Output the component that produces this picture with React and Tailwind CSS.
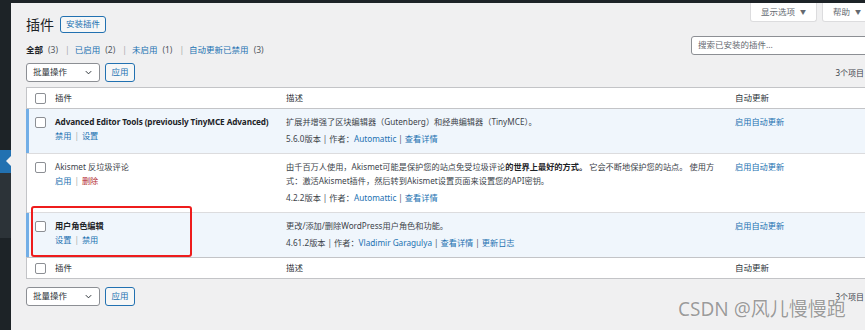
import React from 'react';

const Checkbox = () => (
  <span className="block w-[11px] h-[11px] rounded-[2px] border border-[#8c8f94] bg-white" />
);

const Sep = () => <span className="text-[#a7aaad] mx-[3px]">|</span>;
const MSep = () => <span className="text-[#50575e] mx-[2px]">|</span>;

const A = ({ children, red }) => (
  <span className={red ? 'text-[#b32d2e]' : 'text-[#2271b1]'}>{children}</span>
);

const plugins = [
  {
    name: 'Advanced Editor Tools (previously TinyMCE Advanced)',
    active: true,
    actions: [['禁用'], ['设置']],
    desc: ['扩展并增强了区块编辑器（Gutenberg）和经典编辑器（TinyMCE）。'],
    version: '5.6.0',
    author: 'Automattic',
    links: ['查看详情'],
  },
  {
    name: 'Akismet 反垃圾评论',
    active: false,
    actions: [['启用'], ['删除', true]],
    desc: null,
    version: '4.2.2',
    author: 'Automattic',
    links: ['查看详情'],
  },
  {
    name: '用户角色编辑',
    active: true,
    actions: [['设置'], ['禁用']],
    desc: ['更改/添加/删除WordPress用户角色和功能。'],
    version: '4.61.2',
    author: 'Vladimir Garagulya',
    links: ['查看详情', '更新日志'],
    marked: true,
  },
];

const HeadRow = ({ top }) => (
  <div
    className={`flex h-[21px] items-center text-[8.5px] text-[#2c3338] ${
      top ? 'border-b border-[#c3c4c7]' : 'border-t border-[#c3c4c7]'
    }`}
  >
    <div className="w-[28px] pl-[8px]">
      <Checkbox />
    </div>
    <div className="w-[231px]">插件</div>
    <div className="w-[449px]">描述</div>
    <div className="flex-1">自动更新</div>
  </div>
);

const PluginRow = ({ p, first }) => (
  <div
    className={`relative flex ${first ? '' : 'border-t border-[#dcdcde]'} ${
      p.active ? 'bg-[#f0f6fc]' : 'bg-white'
    }`}
  >
    <div
      className={
        p.active
          ? 'w-[29px] -ml-px border-l-[3px] border-l-[#72aee6] pl-[6px] pt-[8px]'
          : 'w-[28px] pl-[8px] pt-[8px]'
      }
    >
      <Checkbox />
    </div>
    <div className="w-[231px] pt-[6px] pb-[7px] text-[8.2px] leading-[14px]">
      <div className={p.active ? 'font-bold text-[#1d2327] tracking-[-0.1px]' : 'text-[#3c434a]'}>
        {p.name}
      </div>
      <div>
        {p.actions.map(([label, red], i) => (
          <React.Fragment key={label}>
            {i > 0 && <Sep />}
            <A red={red}>{label}</A>
          </React.Fragment>
        ))}
      </div>
    </div>
    <div className="w-[449px] pt-[6px] pb-[7px] text-[8.2px] leading-[14px] text-[#3c434a]">
      {p.desc ? (
        <div className="whitespace-nowrap">{p.desc[0]}</div>
      ) : (
        <div className="whitespace-nowrap">
          由千百万人使用，Akismet可能是保护您的站点免受垃圾评论
          <b className="text-[#1d2327]">的世界上最好的方式。</b> 它会不断地保护您的站点。 使用方
          <br />
          式：激活Akismet插件，然后转到Akismet设置页面来设置您的API密钥。
        </div>
      )}
      <div className="mt-[3px] whitespace-nowrap">
        {p.version}版本
        <MSep />
        作者：<A>{p.author}</A>
        {p.links.map((l) => (
          <React.Fragment key={l}>
            <MSep />
            <A>{l}</A>
          </React.Fragment>
        ))}
      </div>
    </div>
    <div className="flex-1 pt-[6px] text-[8.2px] leading-[14px]">
      <A>启用自动更新</A>
    </div>
    {p.marked && (
      <div className="absolute left-[4px] top-[-7px] w-[161px] h-[51px] rounded-[3px] border-2 border-[#ee1c1c]" />
    )}
  </div>
);

const BulkBar = () => (
  <div className="flex items-center gap-[5px]">
    <div className="flex items-center justify-between w-[74px] h-[19px] px-[6px] rounded-[3px] border border-[#8c8f94] bg-white text-[8.5px] text-[#2c3338]">
      <span>批量操作</span>
      <svg width="9" height="9" viewBox="0 0 20 20" fill="none" stroke="#2c3338" strokeWidth="2.2">
        <path d="M4 7l6 6 6-6" />
      </svg>
    </div>
    <div className="flex items-center justify-center w-[30px] h-[19px] rounded-[3px] border border-[#2271b1] bg-[#f6f7f7] text-[8.5px] text-[#2271b1]">
      应用
    </div>
  </div>
);

const Count = ({ n }) => <span className="ml-[5px] text-[#50575e]">({n})</span>;
const FSep = () => <span className="text-[#a7aaad] ml-[7px] mr-[5px]">|</span>;

export default function App() {
  return (
    <div className="relative w-[865px] h-[330px] overflow-hidden bg-[#f0f0f1] flex flex-col font-['Noto_Sans','Noto_Sans_CJK_SC',sans-serif]">
      <div className="h-[3px] shrink-0 bg-[#1d2327]" />
      <div className="flex flex-1 min-h-0">
        {/* admin menu */}
        <aside className="w-[11px] shrink-0 flex flex-col">
          <div className="h-[147px] bg-[#1d2327]" />
          <div className="relative h-[23px] bg-[#2271b1]">
            <span className="absolute right-0 top-[6px] w-0 h-0 border-y-[5px] border-y-transparent border-r-[5px] border-r-[#f0f0f1]" />
          </div>
          <div className="h-[65px] bg-[#2c3338]" />
          <div className="flex-1 bg-[#1d2327]" />
        </aside>

        <main className="w-[850px] shrink-0 ml-[15px]">
          {/* title + screen meta */}
          <div className="flex items-start justify-between">
            <div className="flex items-center gap-[6px] mt-[13px]">
              <h1 className="text-[14px] leading-[17px] text-[#1d2327]">插件</h1>
              <div className="flex items-center h-[17px] px-[5px] rounded-[3px] border border-[#2271b1] bg-[#f6f7f7] text-[8.5px] text-[#2271b1]">
                安装插件
              </div>
            </div>
            <div className="flex gap-[5px] mr-[4px]">
              <div className="flex items-center gap-[5px] h-[19px] px-[10px] bg-white border border-t-0 border-[#dcdcde] rounded-b-[3px] text-[8.5px] text-[#646970]">
                显示选项<span className="text-[6px]">▼</span>
              </div>
              <div className="flex items-center gap-[5px] h-[19px] px-[10px] bg-white border border-t-0 border-[#dcdcde] rounded-b-[3px] text-[8.5px] text-[#646970]">
                帮助<span className="text-[6px]">▼</span>
              </div>
            </div>
          </div>

          {/* filters + search */}
          <div className="flex items-start justify-between mt-[3px]">
            <div className="mt-[7px] text-[8.5px] leading-[14px] whitespace-nowrap">
              <b className="text-[#1d2327]">全部</b>
              <Count n={3} />
              <FSep />
              <A>已启用</A>
              <Count n={2} />
              <FSep />
              <A>未启用</A>
              <Count n={1} />
              <FSep />
              <A>自动更新已禁用</A>
              <Count n={3} />
            </div>
            <div className="flex items-center w-[180px] h-[19px] mr-[5px] px-[6px] rounded-[3px] border border-[#8c8f94] bg-white text-[8.5px] text-[#646970]">
              搜索已安装的插件...
            </div>
          </div>

          {/* bulk actions top */}
          <div className="flex items-center justify-between mt-[6px]">
            <BulkBar />
            <span className="mr-[12px] text-[8px] text-[#3c434a]">3个项目</span>
          </div>

          {/* table */}
          <div className="mt-[5px] border border-[#c3c4c7] bg-white">
            <HeadRow top />
            {plugins.map((p, i) => (
              <PluginRow key={p.name} p={p} first={i === 0} />
            ))}
            <HeadRow />
          </div>

          {/* bulk actions bottom */}
          <div className="flex items-center justify-between mt-[8px]">
            <BulkBar />
            <span className="mr-[12px] text-[8px] text-[#3c434a]">3个项目</span>
          </div>
        </main>
      </div>

      <div className="absolute left-[678px] top-[298px] text-[19px] leading-[22px] text-[#9b9b9b] whitespace-nowrap [text-shadow:0_0_1px_#ffffff,0_0_1px_#ffffff]">
        CSDN @风儿慢慢跑
      </div>
    </div>
  );
}
